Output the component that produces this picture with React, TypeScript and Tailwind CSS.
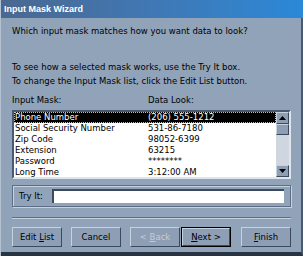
const rows: [string, string][] = [
  ['Phone Number', '(206) 555-1212'],
  ['Social Security Number', '531-86-7180'],
  ['Zip Code', '98052-6399'],
  ['Extension', '63215'],
  ['Password', '********'],
  ['Long Time', '3:12:00 AM'],
];

function Btn({ children, disabled, primary }: { children: React.ReactNode; disabled?: boolean; primary?: boolean }) {
  return (
    <div className={'w-[50px] h-[20px] ' + (primary ? 'border border-black' : '')}>
      <div
        className={
          'w-full h-full flex items-center justify-center border border-t-[#c7d2df] border-l-[#c7d2df] border-r-[#3b4a5e] border-b-[#3b4a5e] bg-[#8e9fb5] ' +
          (disabled ? 'text-[#c3ccd8]' : 'text-black')
        }
      >
        {children}
      </div>
    </div>
  );
}

function Arrow({ up }: { up?: boolean }) {
  return (
    <div className="w-[13px] h-[12px] flex items-center justify-center bg-[#8e9fb5] border border-t-[#c7d2df] border-l-[#c7d2df] border-r-[#3b4a5e] border-b-[#3b4a5e]">
      <svg width="7" height="4" viewBox="0 0 7 4">
        <path d={up ? 'M3.5 0 L7 4 L0 4 Z' : 'M0 0 L7 0 L3.5 4 Z'} fill="#000" />
      </svg>
    </div>
  );
}

export default function App() {
  return (
    <div
      className="w-[303px] h-[256px] bg-[#91a3b9] border-l border-[#b4c1d1] flex flex-col text-[8.5px] leading-[13px] text-black overflow-hidden"
      style={{ fontFamily: '"DejaVu Sans", Tahoma, sans-serif' }}
    >
      <div
        className="h-[18px] shrink-0 bg-gradient-to-r from-[#4a6891] to-[#2a88d8] text-white font-bold text-[9px] flex items-center px-[3px]"
        style={{ fontFamily: '"Liberation Sans", Arial, sans-serif' }}
      >
        Input Mask Wizard
      </div>
      <div className="flex-1 flex flex-col px-[11px] border-b-4 border-[#283444] border-r-2 border-r-[#4a5870]">
        <p className="mt-[7px]">Which input mask matches how you want data to look?</p>
        <p className="mt-[22px] leading-[14px]">To see how a selected mask works, use the Try It box.</p>
        <p className="leading-[14px]">To change the Input Mask list, click the Edit List button.</p>
        <div className="mt-[6px] flex">
          <span className="w-[136px]">Input Mask:</span>
          <span>Data Look:</span>
        </div>
        <div className="mt-[3px] h-[69px] w-[279px] flex bg-white border-2 border-t-[#4a5870] border-l-[#4a5870] border-r-[#dfe5ec] border-b-[#dfe5ec]">
          <div className="flex-1 flex flex-col">
            {rows.map(([a, b], i) => (
              <div
                key={a}
                className={
                  'h-[11px] flex items-center leading-[11px] pl-[1px] ' +
                  (i === 0 ? 'bg-black text-white outline outline-1 outline-dotted outline-[#c0c0c0] -outline-offset-1' : '')
                }
              >
                <span className="w-[133px]">{a}</span>
                <span>{b}</span>
              </div>
            ))}
          </div>
          <div className="w-[13px] flex flex-col bg-[#cfd6df]">
            <Arrow up />
            <div className="h-[11px] bg-[#8e9fb5] border border-t-[#c7d2df] border-l-[#c7d2df] border-r-[#3b4a5e] border-b-[#3b4a5e]" />
            <div className="flex-1" />
            <Arrow />
          </div>
        </div>
        <div className="mt-[6px] h-[22px] w-[279px] flex items-center border border-[#5d6e86] shadow-[inset_1px_1px_0_#c7d2df,1px_1px_0_#c7d2df] px-[6px]">
          <span className="w-[33px]">Try It:</span>
          <div className="flex-1 h-[14px] bg-white border-t-2 border-l-2 border-[#3b4a5e]" />
        </div>
        <div className="mt-[10px] h-[2px] w-[279px] border-t border-t-[#5d6e86] border-b border-b-[#c7d2df]" />
        <div className="mt-[8px] flex w-[279px]">
          <Btn>
            <span>
              Edit <u>L</u>ist
            </span>
          </Btn>
          <div className="ml-[9px]">
            <Btn>Cancel</Btn>
          </div>
          <div className="ml-[9px]">
            <Btn disabled>
              <span>
                &lt; <u>B</u>ack
              </span>
            </Btn>
          </div>
          <div className="ml-[1px]">
            <Btn primary>
              <span>
                <u>N</u>ext &gt;
              </span>
            </Btn>
          </div>
          <div className="ml-[10px]">
            <Btn>
              <span>
                <u>F</u>inish
              </span>
            </Btn>
          </div>
        </div>
      </div>
    </div>
  );
}
